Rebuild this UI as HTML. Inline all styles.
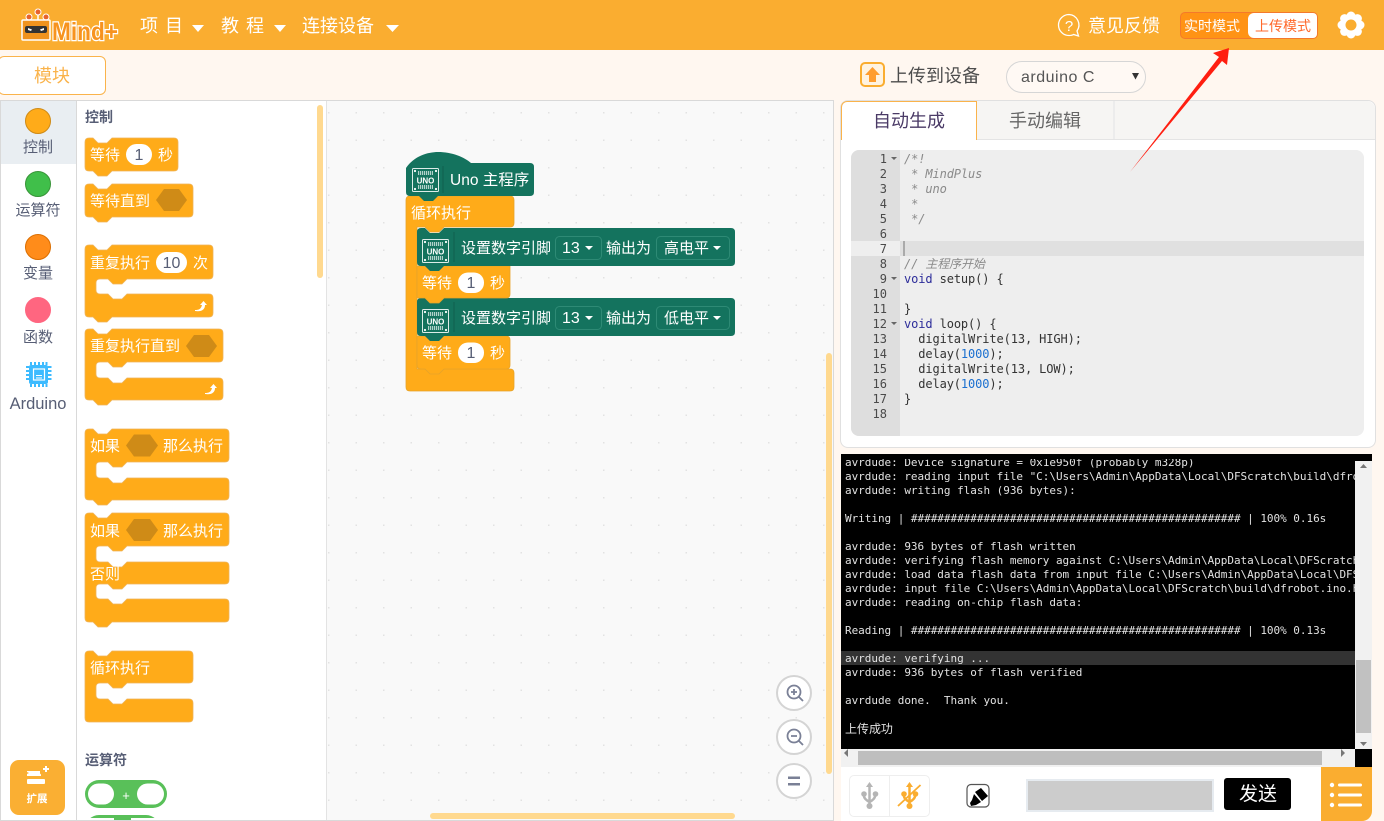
<!DOCTYPE html>
<html lang="zh"><head><meta charset="utf-8"><title>Mind+</title>
<style>
html,body{margin:0;padding:0;width:1384px;height:821px;overflow:hidden;background:#FFF7F0;font-family:"Liberation Sans","Noto Sans CJK SC",sans-serif}
div{box-sizing:border-box}
.a{position:absolute}
.t{position:absolute;white-space:nowrap;line-height:1}
svg text{font-family:"Liberation Sans","Noto Sans CJK SC",sans-serif}
.code div{height:15px;line-height:15px;white-space:pre}
.code i{color:#8a8a8a}
.code b{font-weight:normal;color:#2d2d9a}
.code u{text-decoration:none;color:#1a6fd0}
.con div{height:14px;line-height:14px;white-space:pre}
.gut div{height:15px;line-height:15px;text-align:right}
</style></head><body>
<div class="a" style="left:0;top:0;width:1384px;height:50px;background:#FAAD30"></div>
<svg class="a" style="left:0;top:0" width="130" height="50">
<g stroke="#fff" stroke-width="1.500"><line x1="29" y1="20" x2="29" y2="17"/><line x1="38" y1="20" x2="38" y2="12"/><line x1="46" y1="20" x2="46" y2="17"/></g>
<circle cx="29" cy="17" r="3" fill="#E8632B" stroke="#fff"/><circle cx="38" cy="12" r="3" fill="#E8632B" stroke="#fff"/><circle cx="46" cy="17" r="3" fill="#E8632B" stroke="#fff"/>
<rect x="22" y="20" width="28" height="20" rx="1" fill="#F0931E" stroke="#fff" stroke-width="1.500"/>
<rect x="25" y="26" width="22" height="7" rx="2" fill="#333"/><path d="M28 28l4 1.500-1 1.500-3-1zM44 28l-4 1.500 1 1.500 3-1z" fill="#fff"/>
<text x="52" y="40" font-size="25" font-weight="700" fill="#F7931E" stroke="#fff" stroke-width="2.500" paint-order="stroke" textLength="66" lengthAdjust="spacingAndGlyphs">Mind+</text>
</svg>
<div class="t" style="left:140px;top:17px;font-size:18px;color:#fff;letter-spacing:7px">项目</div>
<div class="t" style="left:221px;top:17px;font-size:18px;color:#fff;letter-spacing:7px">教程</div>
<div class="t" style="left:302px;top:17px;font-size:18px;color:#fff">连接设备</div>
<svg class="a" style="left:0;top:0" width="1384" height="50">
<path d="M192 25h12l-6 7zM274 25h12l-6 7zM386 25h13l-6.500 7z" fill="#fff"/>
<path d="M1069 14.500a10.500 10.500 0 1 0 0 21c2 0 3 0 4.500-1l5 1.500-1.500-5a10.500 10.500 0 0 0-8-16.500z" fill="none" stroke="#fff" stroke-width="1.300"/>
<text x="1069" y="31" font-size="15" fill="#fff" text-anchor="middle">?</text>
<g fill="#fff"><circle cx="1351" cy="16" r="4.500"/><circle cx="1351" cy="34" r="4.500"/><circle cx="1342" cy="25" r="4.500"/><circle cx="1360" cy="25" r="4.500"/><circle cx="1344.600" cy="18.600" r="4.500"/><circle cx="1357.400" cy="18.600" r="4.500"/><circle cx="1344.600" cy="31.400" r="4.500"/><circle cx="1357.400" cy="31.400" r="4.500"/><circle cx="1351" cy="25" r="9"/></g>
<circle cx="1351" cy="25" r="5.500" fill="#FAAD30"/>
</svg>
<div class="t" style="left:1088px;top:17px;font-size:18px;color:#fff">意见反馈</div>
<div class="a" style="left:1180px;top:12px;width:138px;height:27px;border:1px solid #F4792B;border-radius:5px;background:#FF9315;overflow:hidden">
<div class="a" style="left:67px;top:0;width:70px;height:25px;background:#fff;border-radius:6px 0 0 6px"></div>
<div class="t" style="left:3px;top:6px;font-size:14px;color:#fff">实时模式</div>
<div class="t" style="left:74px;top:6px;font-size:14px;color:#FF6A2C">上传模式</div>
</div>

<div class="a" style="left:-2px;top:56px;width:108px;height:39px;background:#fff;border:1px solid #FAB34B;border-radius:6px"></div>
<div class="t" style="left:34px;top:67px;font-size:18px;color:#FAB34B">模块</div>

<div class="a" style="left:860px;top:62px;width:25px;height:25px;background:#FFF3E0;border:2px solid #FAAD30;border-radius:5px"></div>
<svg class="a" style="left:860px;top:62px" width="25" height="25"><path d="M12.500 5l7.500 8h-4v7h-7v-7h-4z" fill="#FF9D2E"/></svg>
<div class="t" style="left:890px;top:67px;font-size:18px;color:#4d4d4d">上传到设备</div>
<div class="a" style="left:1006px;top:61px;width:140px;height:32px;border:1px solid #D6D6D6;border-radius:16px;background:#FFF9F4"></div>
<div class="t" style="left:1021px;top:70px;font-size:16px;color:#555;letter-spacing:.5px">arduino C</div>
<svg class="a" style="left:1130px;top:72px" width="12" height="10"><path d="M2 1h7l-3.500 6.500z" fill="#333"/></svg>

<!-- left panel -->
<div class="a" style="left:0;top:100px;width:834px;height:721px;background:#fff;border:1px solid #D9D9D9;overflow:hidden"></div>
<div class="a" style="left:1px;top:101px;width:75px;height:63px;background:#E9EEF2"></div>
<div class="a" style="left:76px;top:101px;width:1px;height:719px;background:#D9D9D9"></div>
<div class="a" style="left:326px;top:101px;width:507px;height:719px;background:#F9F9F9;border-left:1px solid #E3E3E3"></div>
<svg class="a" style="left:326px;top:101px" width="507" height="719">
<defs><pattern id="dots" x="0" y="0" width="27.500" height="27.500" patternUnits="userSpaceOnUse"><rect x="2" y="11" width="1.500" height="1.500" fill="#E2E2E2"/></pattern></defs>
<rect width="507" height="719" fill="url(#dots)"/></svg>

<svg class="a" style="left:0;top:0" width="834" height="821">
<circle cx="38" cy="121" r="12.500" fill="#FFAB19" stroke="#CF8B17"/>
<circle cx="38" cy="184" r="12.500" fill="#40BF4A" stroke="#389438"/>
<circle cx="38" cy="247" r="12.500" fill="#FF8C1A" stroke="#DB6E00"/>
<circle cx="38" cy="310" r="12.500" fill="#FF6680" stroke="#FF6680"/>
<rect x="29" y="365" width="19" height="19" rx="2" fill="#3DBBFF"/>
<path d="M31 362v3M35 362v3M39 362v3M43 362v3M46.500 362v3M31 384v3M35 384v3M39 384v3M43 384v3M46.500 384v3M26 367h3M26 371h3M26 375h3M26 379h3M48 367h3.500M48 371h3.500M48 375h3.500M48 379h3.500" stroke="#3DBBFF" stroke-width="2" fill="none"/>
<rect x="33.500" y="369" width="11" height="11" fill="none" stroke="#fff" stroke-width="1.200"/><path d="M36 375.500h6M36 378h6" stroke="#fff"/>
<g font-size="15" fill="#575E75" text-anchor="middle">
<text x="38" y="152">控制</text><text x="38" y="215">运算符</text><text x="38" y="278">变量</text><text x="38" y="342">函数</text>
<text x="38" y="409" font-size="16.500">Arduino</text></g>

<rect x="10" y="760" width="55" height="55" rx="9" fill="#FAAF33"/>
<path d="M27 771h13v2.500l1 1v1.500H27v-2l2-1-2-1z" fill="#fff"/><rect x="27" y="779" width="18" height="5" rx="1" fill="#fff"/>
<path d="M43 769h6M46 766v6" stroke="#fff" stroke-width="2"/>
<text x="37" y="802" font-size="10.500" fill="#fff" font-weight="700" text-anchor="middle">扩展</text>

<text x="85" y="122" font-size="14" font-weight="700" fill="#575E75">控制</text>
<g fill="#FFAB19" stroke="#EFB45A" stroke-width=".8">
<path d="M85 142q0-4 4-4h4l5 5h9l5-5H174q4 0 4 4V167q0 4-4 4H112l-5 5h-9l-5-5h-4q-4 0-4-4z"/>
<path d="M85 188q0-4 4-4h4l5 5h9l5-5H189q4 0 4 4V213q0 4-4 4H112l-5 5h-9l-5-5h-4q-4 0-4-4z"/>
<path d="M85 249q0-4 4-4h4l5 5h9l5-5H209q4 0 4 4V275q0 4-4 4H127l-5 5h-9l-5-5h-8q-4 0-4 4V290q0 4 4 4h8l5 5h9l5-5H209q4 0 4 4V313q0 4-4 4H112l-5 5h-9l-5-5h-4q-4 0-4-4z"/>
<path d="M85 333q0-4 4-4h4l5 5h9l5-5H219q4 0 4 4V358q0 4-4 4H127l-5 5h-9l-5-5h-8q-4 0-4 4V374q0 4 4 4h8l5 5h9l5-5H219q4 0 4 4V396q0 4-4 4H112l-5 5h-9l-5-5h-4q-4 0-4-4z"/>
<path d="M85 433q0-4 4-4h4l5 5h9l5-5H225q4 0 4 4V458q0 4-4 4H127l-5 5h-9l-5-5h-8q-4 0-4 4V474q0 4 4 4h8l5 5h9l5-5H225q4 0 4 4V496q0 4-4 4H112l-5 5h-9l-5-5h-4q-4 0-4-4z"/>
<path d="M85 517q0-4 4-4h4l5 5h9l5-5H225q4 0 4 4V542q0 4-4 4H127l-5 5h-9l-5-5h-8q-4 0-4 4V558q0 4 4 4h8l5 5h9l5-5H225q4 0 4 4V580q0 4-4 4H127l-5 5h-9l-5-5h-8q-4 0-4 4V595q0 4 4 4h8l5 5h9l5-5H225q4 0 4 4V618q0 4-4 4H112l-5 5h-9l-5-5h-4q-4 0-4-4z"/>
<path d="M85 655q0-4 4-4h4l5 5h9l5-5H189q4 0 4 4V679q0 4-4 4H127l-5 5h-9l-5-5h-8q-4 0-4 4V695q0 4 4 4h8l5 5h9l5-5H189q4 0 4 4V718q0 4-4 4H89q-4 0-4-4z"/>
</g>
<g fill="#CF8B17">
<path d="M156 200l8-11h15l8 11-8 11h-15z"/>
<path d="M186 346l8-11h15l8 11-8 11h-15z"/>
<path d="M126 445.500l8-11h16l8 11-8 11h-16z"/>
<path d="M126 530l8-11h16l8 11-8 11h-16z"/>
</g>
<g fill="#fff"><rect x="126" y="144" width="26" height="21" rx="10.500"/><rect x="156" y="252" width="31" height="21" rx="10.500"/></g>
<g fill="#575E75" font-size="16" text-anchor="middle"><text x="139" y="160">1</text><text x="171.500" y="268">10</text></g>
<g fill="#fff" font-size="15">
<text x="90" y="160">等待</text><text x="158" y="160">秒</text>
<text x="90" y="206">等待直到</text>
<text x="90" y="268">重复执行</text><text x="193" y="268">次</text>
<text x="90" y="351">重复执行直到</text>
<text x="90" y="451">如果</text><text x="163" y="451">那么执行</text>
<text x="90" y="536">如果</text><text x="163" y="536">那么执行</text>
<text x="90" y="579">否则</text>
<text x="90" y="673">循环执行</text>
</g>
<path d="M195 310c4 0 6-1 7-5l-2 0 3.500-4 3.500 4-2 0c0 5-4 7-10 6z" fill="#fff"/>
<path d="M205 393c4 0 6-1 7-5l-2 0 3.500-4 3.500 4-2 0c0 5-4 7-10 6z" fill="#fff"/>
<text x="85" y="765" font-size="14" font-weight="700" fill="#575E75">运算符</text>
<rect x="85" y="780" width="82" height="28" rx="14" fill="#59C059"/>
<rect x="88" y="783.500" width="26" height="21" rx="10.500" fill="#fff"/><rect x="137" y="783.500" width="27" height="21" rx="10.500" fill="#fff"/>
<text x="126" y="800" font-size="13" fill="#fff" text-anchor="middle">+</text>
<rect x="85" y="815" width="75" height="28" rx="14" fill="#59C059"/>
<rect x="88" y="818" width="26" height="3" fill="#fff"/><rect x="131" y="818" width="26" height="3" fill="#fff"/>
<rect x="0" y="820" width="834" height="1" fill="#D9D9D9"/>
<rect x="317" y="105" width="6" height="173" rx="3" fill="#FFD98F"/>
<rect x="826" y="353" width="6" height="421" rx="3" fill="#FFD98F"/>
<rect x="430" y="813" width="305" height="6" rx="3" fill="#FFD98F"/>

<!-- workspace -->
<g stroke="#E6A32A" stroke-width=".8" fill="#FFAB19">
<path d="M406 200q0-4 4-4H510q4 0 4 4V223q0 4-4 4H444l-5 5h-9l-5-5H417V369H510q4 0 4 4V387q0 4-4 4H410q-4 0-4-4z"/>
<path d="M417 336H506q4 0 4 4V365q0 4-4 4H444l-5 5h-9l-5-5h-4q-4 0-4-4z"/>
</g>
<path d="M417 302q0-4 4-4h4l5 5h9l5-5H731q4 0 4 4V332q0 4-4 4H444l-5 5h-9l-5-5h-4q-4 0-4-4z" fill="#14735E"/>
<path d="M417 266H510V294q0 4-4 4H444l-5 5h-9l-5-5h-8z" fill="#FFAB19" stroke="#E6A32A" stroke-width=".8"/>
<path d="M417 232q0-4 4-4h4l5 5h9l5-5H731q4 0 4 4V262q0 4-4 4H444l-5 5h-9l-5-5h-4q-4 0-4-4z" fill="#14735E"/>
<path d="M406 168C414 156 428 152 438 152C452 152 464 157 471 163H530q4 0 4 4V192q0 4-4 4H438l-5 5h-9l-5-5H410q-4 0-4-4z" fill="#14735E"/>
<g stroke="#0F5F4E"><path d="M443 166v27M454 232v30M454 302v30" fill="none"/></g>
<g fill="none" stroke="#2E8A75"><rect x="555.500" y="236.500" width="46" height="23" rx="4"/><rect x="656.500" y="236.500" width="73" height="23" rx="4"/><rect x="555.500" y="306.500" width="46" height="23" rx="4"/><rect x="656.500" y="306.500" width="73" height="23" rx="4"/></g>
<g transform="translate(412,168)"><rect x=".500" y=".500" width="26" height="23" rx="1" fill="none" stroke="#DDECE8"/><path d="M6 4h15M6 6h15M6 18h15M6 20h15" stroke="#E8F2EF" stroke-width="1.500" stroke-dasharray="1.200 .8" fill="none"/><circle cx="3" cy="3" r="1.100" fill="#fff"/><circle cx="24" cy="3" r="1.100" fill="#fff"/><circle cx="3" cy="21" r="1.100" fill="#fff"/><circle cx="24" cy="21" r="1.100" fill="#fff"/><text x="13.500" y="15.500" font-size="8" font-weight="700" fill="#fff" text-anchor="middle">UNO</text></g>
<g transform="translate(422,239)"><rect x=".500" y=".500" width="26" height="23" rx="1" fill="none" stroke="#DDECE8"/><path d="M6 4h15M6 6h15M6 18h15M6 20h15" stroke="#E8F2EF" stroke-width="1.500" stroke-dasharray="1.200 .8" fill="none"/><circle cx="3" cy="3" r="1.100" fill="#fff"/><circle cx="24" cy="3" r="1.100" fill="#fff"/><circle cx="3" cy="21" r="1.100" fill="#fff"/><circle cx="24" cy="21" r="1.100" fill="#fff"/><text x="13.500" y="15.500" font-size="8" font-weight="700" fill="#fff" text-anchor="middle">UNO</text></g>
<g transform="translate(422,309)"><rect x=".500" y=".500" width="26" height="23" rx="1" fill="none" stroke="#DDECE8"/><path d="M6 4h15M6 6h15M6 18h15M6 20h15" stroke="#E8F2EF" stroke-width="1.500" stroke-dasharray="1.200 .8" fill="none"/><circle cx="3" cy="3" r="1.100" fill="#fff"/><circle cx="24" cy="3" r="1.100" fill="#fff"/><circle cx="3" cy="21" r="1.100" fill="#fff"/><circle cx="24" cy="21" r="1.100" fill="#fff"/><text x="13.500" y="15.500" font-size="8" font-weight="700" fill="#fff" text-anchor="middle">UNO</text></g>
<g fill="#fff"><rect x="458" y="272.500" width="26" height="20.500" rx="10"/><rect x="458" y="342.500" width="26" height="20.500" rx="10"/></g>
<g fill="#575E75" font-size="16" text-anchor="middle"><text x="471" y="288">1</text><text x="471" y="358">1</text></g>
<g fill="#fff" font-size="15">
<text x="450" y="185" font-size="15.500">Uno 主程序</text>
<text x="411" y="218">循环执行</text>
<text x="461" y="253">设置数字引脚</text><text x="562" y="253" font-size="16">13</text><text x="606" y="253">输出为</text><text x="664" y="253">高电平</text>
<text x="422" y="288">等待</text><text x="490" y="288">秒</text>
<text x="461" y="323">设置数字引脚</text><text x="562" y="323" font-size="16">13</text><text x="606" y="323">输出为</text><text x="664" y="323">低电平</text>
<text x="422" y="358">等待</text><text x="490" y="358">秒</text>
</g>
<path d="M585 246h8l-4 4zM713 246h8l-4 4zM585 316h8l-4 4zM713 316h8l-4 4z" fill="#fff"/>

<!-- zoom -->
<g fill="#fff" stroke="#D4D4D4" stroke-width="2"><circle cx="794" cy="693" r="17"/><circle cx="794" cy="737" r="17"/><circle cx="794" cy="781" r="17"/></g>
<g fill="none" stroke="#7A8096" stroke-width="1.800"><circle cx="794" cy="692" r="6.500"/><path d="M799 697l4 4M791 692h6M794 689v6"/><circle cx="794" cy="736" r="6.500"/><path d="M799 741l4 4M791 736h6"/></g>
<path d="M788 776.500h12v2.500h-12zM788 783h12v2.500h-12z" fill="#7A8096"/>
</svg>

<!-- code panel -->
<div class="a" style="left:840px;top:100px;width:536px;height:348px;background:#fff;border:1px solid #E0E0E0;border-radius:8px"></div>
<div class="a" style="left:841px;top:101px;width:534px;height:39px;background:#F6F5F3;border-bottom:1px solid #E4E4E4;border-radius:8px 8px 0 0"></div>
<div class="a" style="left:841px;top:101px;width:136px;height:39px;background:#fff;border:1px solid #FAB34B;border-bottom:0;border-radius:6px 0 0 0"></div>
<div class="a" style="left:1113px;top:101px;width:2px;height:38px;background:#ECECEC"></div>
<div class="t" style="left:873px;top:112px;font-size:18px;color:#4A3A66">自动生成</div>
<div class="t" style="left:1009px;top:112px;font-size:18px;color:#666">手动编辑</div>
<div class="a" style="left:851px;top:150px;width:513px;height:286px;background:#EEEEEE;border-radius:8px;overflow:hidden">
<div class="a" style="left:0;top:0;width:49px;height:286px;background:#DEDEDE"></div>
<div class="a" style="left:0;top:91px;width:49px;height:15px;background:#EEEEEE"></div>
<div class="a" style="left:49px;top:91px;width:464px;height:15px;background:#E0E0E0"></div>
<div class="a" style="left:52px;top:91px;width:2px;height:15px;background:#AAA"></div>
<div class="a gut" style="left:0;top:2px;width:36px;font:12px 'DejaVu Sans Mono',monospace;color:#4a4a4a">
<div>1</div><div>2</div><div>3</div><div>4</div><div>5</div><div>6</div><div>7</div><div>8</div><div>9</div><div>10</div><div>11</div><div>12</div><div>13</div><div>14</div><div>15</div><div>16</div><div>17</div><div>18</div></div>
<svg class="a" style="left:0;top:0" width="49" height="286"><path d="M40 7h6l-3 3zM40 127h6l-3 3zM40 172h6l-3 3z" fill="#666"/></svg>
<div class="a code" style="left:53px;top:2px;font:12px 'DejaVu Sans Mono','Noto Sans CJK SC',monospace;color:#333;letter-spacing:-.11px">
<div><i>/*!</i></div><div><i> * MindPlus</i></div><div><i> * uno</i></div><div><i> *</i></div><div><i> */</i></div><div> </div><div> </div><div><i>// 主程序开始</i></div><div><b>void</b> setup() {</div><div> </div><div>}</div><div><b>void</b> loop() {</div><div>  digitalWrite(13, HIGH);</div><div>  delay(<u>1000</u>);</div><div>  digitalWrite(13, LOW);</div><div>  delay(<u>1000</u>);</div><div>}</div><div> </div></div>
</div>

<!-- console -->
<div class="a" style="left:841px;top:454px;width:514px;height:295px;background:#000;overflow:hidden">
<div class="a" style="left:0;top:197px;width:514px;height:14px;background:#333"></div>
<div class="a con" style="left:4px;top:2px;font:11px 'DejaVu Sans Mono','Noto Sans CJK SC',monospace;color:#E2E2E2;letter-spacing:-.03px">
<div>avrdude: Device signature = 0x1e950f (probably m328p)</div>
<div>avrdude: reading input file "C:\Users\Admin\AppData\Local\DFScratch\build\dfrobot.ino.hex"</div>
<div>avrdude: writing flash (936 bytes):</div>
<div> </div>
<div>Writing | ################################################## | 100% 0.16s</div>
<div> </div>
<div>avrdude: 936 bytes of flash written</div>
<div>avrdude: verifying flash memory against C:\Users\Admin\AppData\Local\DFScratch\build</div>
<div>avrdude: load data flash data from input file C:\Users\Admin\AppData\Local\DFScratch\build</div>
<div>avrdude: input file C:\Users\Admin\AppData\Local\DFScratch\build\dfrobot.ino.hex</div>
<div>avrdude: reading on-chip flash data:</div>
<div> </div>
<div>Reading | ################################################## | 100% 0.13s</div>
<div> </div>
<div>avrdude: verifying ...</div>
<div>avrdude: 936 bytes of flash verified</div>
<div> </div>
<div>avrdude done.  Thank you.</div>
<div> </div>
<div style="font-size:12px">上传成功</div>
</div>
<div class="a" style="left:0;top:0;width:514px;height:5px;background:#000"></div>
</div>
<div class="a" style="left:1355px;top:461px;width:17px;height:288px;background:#F1F1F1"></div>
<div class="a" style="left:1355px;top:454px;width:17px;height:7px;background:#000"></div>
<div class="a" style="left:1356px;top:660px;width:15px;height:73px;background:#C1C1C1"></div>
<div class="a" style="left:841px;top:749px;width:514px;height:18px;background:#F1F1F1"></div>
<div class="a" style="left:858px;top:751px;width:464px;height:14px;background:#BEBEBE"></div>
<div class="a" style="left:1355px;top:749px;width:17px;height:18px;background:#000"></div>
<svg class="a" style="left:841px;top:461px" width="531" height="306"><path d="M519 7h7l-3.500-4zM519 281h7l-3.500 4zM7 296l-4-4 4-4zM500 288l4 4-4 4z" fill="#777"/></svg>

<!-- toolbar -->
<div class="a" style="left:841px;top:767px;width:480px;height:54px;background:#fff"></div>
<div class="a" style="left:849px;top:775px;width:41px;height:42px;border:1px solid #EEE;border-radius:5px 0 0 5px"></div>
<div class="a" style="left:889px;top:775px;width:41px;height:42px;border:1px solid #EEE;border-radius:0 5px 5px 0"></div>
<svg class="a" style="left:841px;top:767px" width="160" height="54">
<g fill="none" stroke="#B5B5B5" stroke-width="2.500"><path d="M28.500 18V39M23 27v2q0 3 5.500 6q5.500-3 5.500-6v-2"/></g>
<path d="M28.500 15l-3.500 5h7z" fill="#B5B5B5"/><circle cx="23" cy="27" r="2.800" fill="#B5B5B5"/><circle cx="34.500" cy="27" r="2.800" fill="#B5B5B5"/><circle cx="28.500" cy="39" r="3" fill="#B5B5B5"/>
<g fill="none" stroke="#FAAD30" stroke-width="2.500"><path d="M68.500 18V39M63 27v2q0 3 5.500 6q5.500-3 5.500-6v-2"/></g>
<path d="M68.500 15l-3.500 5h7z" fill="#FAAD30"/><circle cx="63" cy="27" r="2.800" fill="#FAAD30"/><circle cx="74.500" cy="27" r="2.800" fill="#FAAD30"/><circle cx="68.500" cy="39" r="3" fill="#FAAD30"/>
<path d="M57 39L79.500 18" stroke="#FAAD30" stroke-width="1.800"/>
<rect x="126" y="17.500" width="22" height="22.500" rx="4" fill="#fff" stroke="#555" stroke-width="1.200"/>
<path d="M134 25L140 21L147 29L141 34zM133 27L140 35L135 38L130 39L129 36L131 33z" fill="#000"/>
</svg>
<div class="a" style="left:1026px;top:779px;width:188px;height:33px;background:#CCC;border:2px solid #E6EBF0"></div>
<div class="a" style="left:1224px;top:778px;width:67px;height:32px;background:#000;border-radius:3px"></div>
<div class="t" style="left:1239px;top:785px;font-size:19px;color:#fff">发送</div>
<div class="a" style="left:1321px;top:767px;width:51px;height:54px;background:#FAAD30;border-radius:0 0 10px 0"></div>
<svg class="a" style="left:1321px;top:767px" width="51" height="54"><g fill="#fff"><circle cx="11" cy="18" r="2.200"/><circle cx="11" cy="28" r="2.200"/><circle cx="11" cy="38" r="2.200"/><rect x="17" y="16.500" width="24" height="3" rx="1.500"/><rect x="17" y="26.500" width="24" height="3" rx="1.500"/><rect x="17" y="36.500" width="24" height="3" rx="1.500"/></g></svg>

<!-- red arrow -->
<svg class="a" style="left:0;top:0" width="1384" height="821"><path d="M1229 48L1213 53L1219 57L1130 172L1222 61L1227 65Z" fill="#FF1E10"/></svg>
</body></html>
